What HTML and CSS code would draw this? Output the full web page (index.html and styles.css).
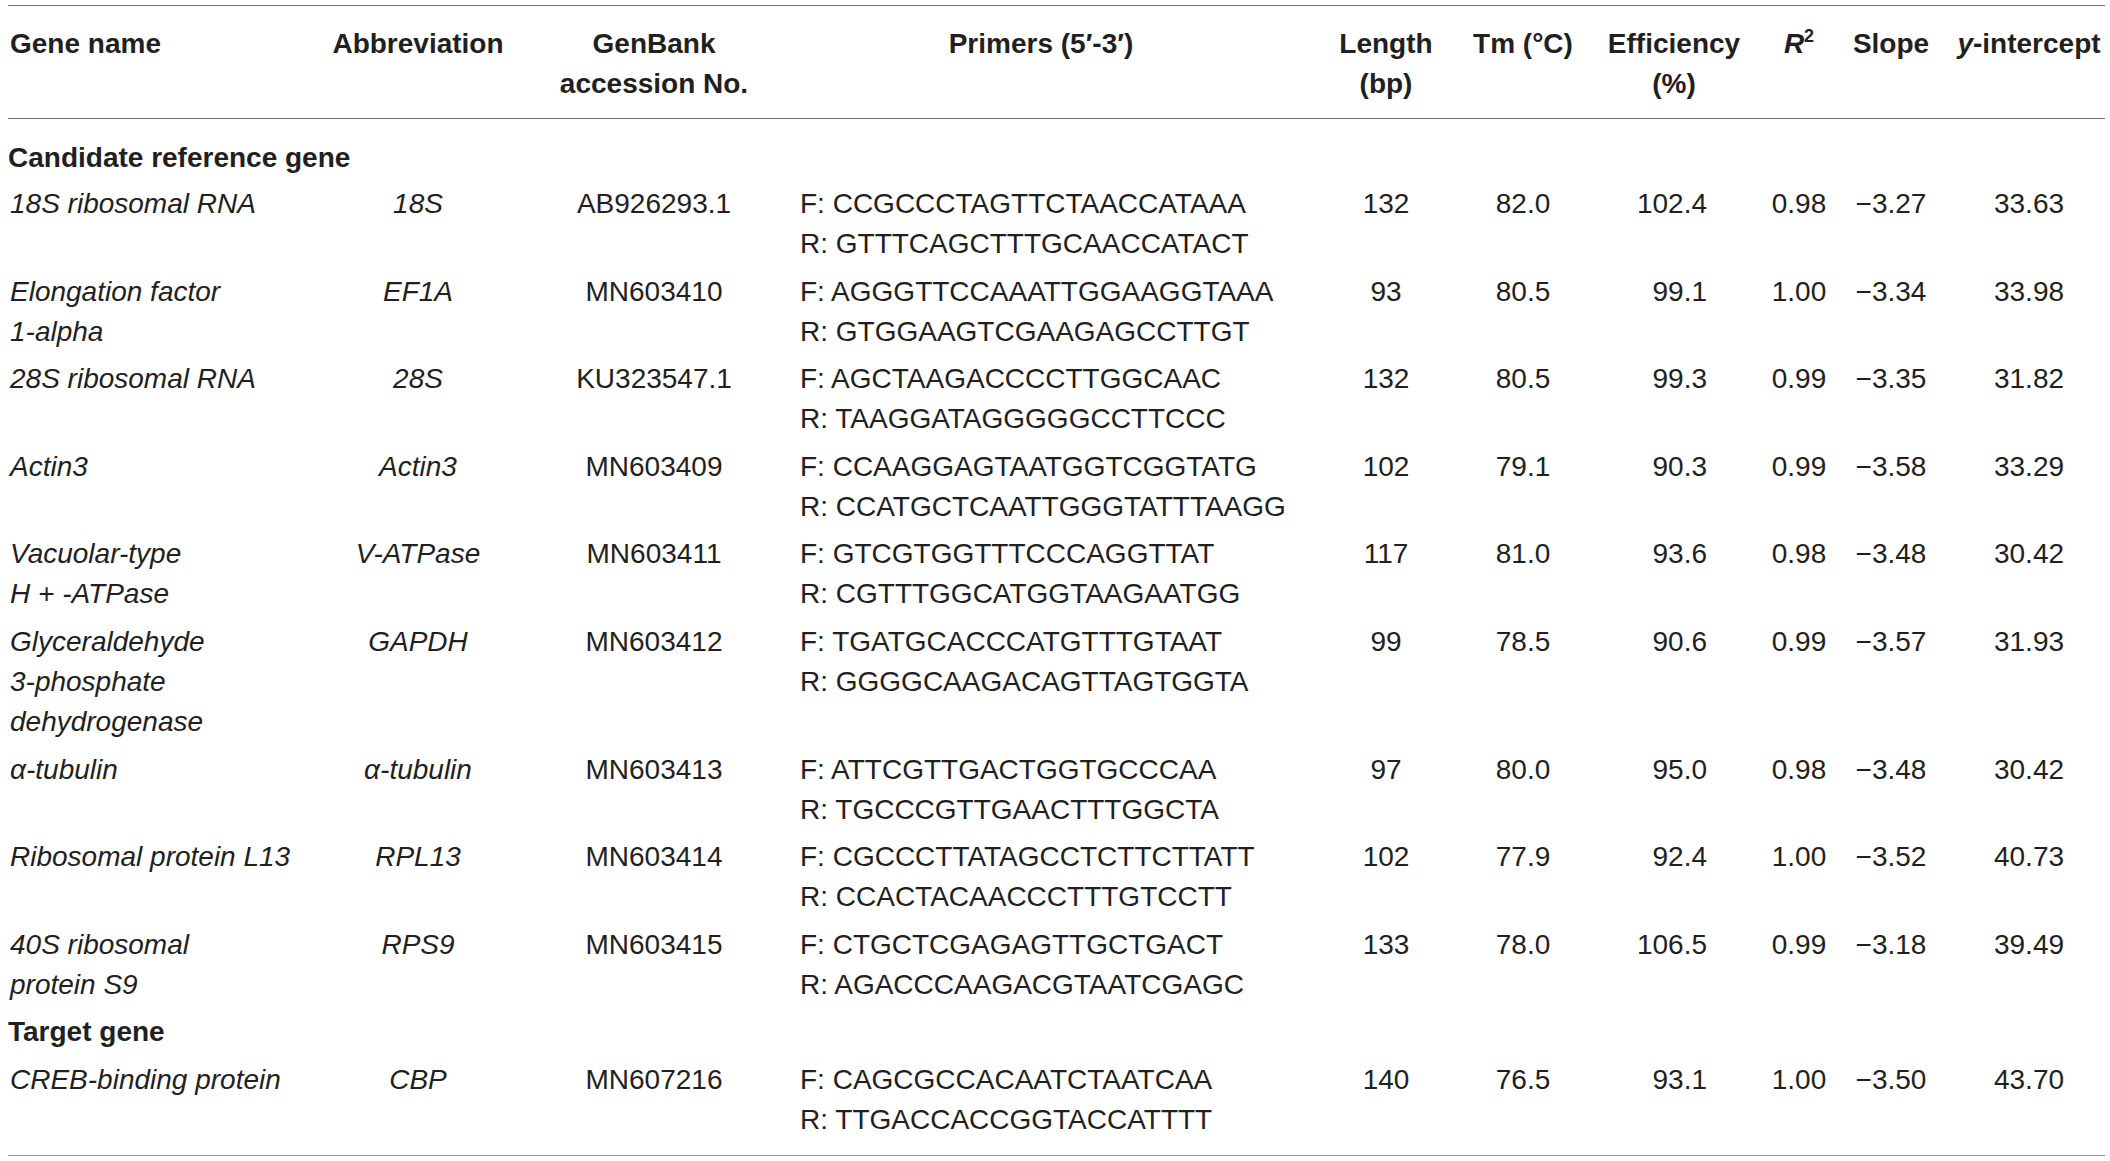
FILE: index.html
```html
<!DOCTYPE html>
<html lang="en">
<head>
<meta charset="utf-8">
<title>Candidate reference genes</title>
<link rel="stylesheet" href="styles.css">
</head>
<body>
<div class="wrap">
<table class="genes">
  <colgroup>
    <col class="w1"><col class="w2"><col class="w3"><col class="w4"><col class="w5">
    <col class="w6"><col class="w7"><col class="w8"><col class="w9"><col class="w10">
  </colgroup>
  <thead>
    <tr>
      <th class="left">Gene name</th>
      <th>Abbreviation</th>
      <th>GenBank<br>accession No.</th>
      <th>Primers (5′-3′)</th>
      <th>Length<br>(bp)</th>
      <th>Tm (°C)</th>
      <th>Efficiency<br>(%)</th>
      <th><i>R</i><sup>2</sup></th>
      <th>Slope</th>
      <th><i>y</i>-intercept</th>
    </tr>
  </thead>
  <tbody>
    <tr class="group first"><td colspan="10">Candidate reference gene</td></tr>
    <tr>
      <td class="name">18S ribosomal RNA</td><td class="abbr">18S</td><td class="acc">AB926293.1</td>
      <td class="primer">F: CCGCCCTAGTTCTAACCATAAA<br>R: GTTTCAGCTTTGCAACCATACT</td>
      <td class="num">132</td><td class="num">82.0</td><td class="eff">102.4</td><td class="num">0.98</td><td class="num">−3.27</td><td class="num">33.63</td>
    </tr>
    <tr>
      <td class="name">Elongation factor<br>1-alpha</td><td class="abbr">EF1A</td><td class="acc">MN603410</td>
      <td class="primer">F: AGGGTTCCAAATTGGAAGGTAAA<br>R: GTGGAAGTCGAAGAGCCTTGT</td>
      <td class="num">93</td><td class="num">80.5</td><td class="eff">99.1</td><td class="num">1.00</td><td class="num">−3.34</td><td class="num">33.98</td>
    </tr>
    <tr>
      <td class="name">28S ribosomal RNA</td><td class="abbr">28S</td><td class="acc">KU323547.1</td>
      <td class="primer">F: AGCTAAGACCCCTTGGCAAC<br>R: TAAGGATAGGGGGCCTTCCC</td>
      <td class="num">132</td><td class="num">80.5</td><td class="eff">99.3</td><td class="num">0.99</td><td class="num">−3.35</td><td class="num">31.82</td>
    </tr>
    <tr>
      <td class="name">Actin3</td><td class="abbr">Actin3</td><td class="acc">MN603409</td>
      <td class="primer">F: CCAAGGAGTAATGGTCGGTATG<br>R: CCATGCTCAATTGGGTATTTAAGG</td>
      <td class="num">102</td><td class="num">79.1</td><td class="eff">90.3</td><td class="num">0.99</td><td class="num">−3.58</td><td class="num">33.29</td>
    </tr>
    <tr>
      <td class="name">Vacuolar-type<br>H + -ATPase</td><td class="abbr">V-ATPase</td><td class="acc">MN603411</td>
      <td class="primer">F: GTCGTGGTTTCCCAGGTTAT<br>R: CGTTTGGCATGGTAAGAATGG</td>
      <td class="num">117</td><td class="num">81.0</td><td class="eff">93.6</td><td class="num">0.98</td><td class="num">−3.48</td><td class="num">30.42</td>
    </tr>
    <tr>
      <td class="name">Glyceraldehyde<br>3-phosphate<br>dehydrogenase</td><td class="abbr">GAPDH</td><td class="acc">MN603412</td>
      <td class="primer">F: TGATGCACCCATGTTTGTAAT<br>R: GGGGCAAGACAGTTAGTGGTA</td>
      <td class="num">99</td><td class="num">78.5</td><td class="eff">90.6</td><td class="num">0.99</td><td class="num">−3.57</td><td class="num">31.93</td>
    </tr>
    <tr>
      <td class="name">α-tubulin</td><td class="abbr">α-tubulin</td><td class="acc">MN603413</td>
      <td class="primer">F: ATTCGTTGACTGGTGCCCAA<br>R: TGCCCGTTGAACTTTGGCTA</td>
      <td class="num">97</td><td class="num">80.0</td><td class="eff">95.0</td><td class="num">0.98</td><td class="num">−3.48</td><td class="num">30.42</td>
    </tr>
    <tr>
      <td class="name">Ribosomal protein L13</td><td class="abbr">RPL13</td><td class="acc">MN603414</td>
      <td class="primer">F: CGCCCTTATAGCCTCTTCTTATT<br>R: CCACTACAACCCTTTGTCCTT</td>
      <td class="num">102</td><td class="num">77.9</td><td class="eff">92.4</td><td class="num">1.00</td><td class="num">−3.52</td><td class="num">40.73</td>
    </tr>
    <tr>
      <td class="name">40S ribosomal<br>protein S9</td><td class="abbr">RPS9</td><td class="acc">MN603415</td>
      <td class="primer">F: CTGCTCGAGAGTTGCTGACT<br>R: AGACCCAAGACGTAATCGAGC</td>
      <td class="num">133</td><td class="num">78.0</td><td class="eff">106.5</td><td class="num">0.99</td><td class="num">−3.18</td><td class="num">39.49</td>
    </tr>
    <tr class="group"><td colspan="10">Target gene</td></tr>
    <tr class="last">
      <td class="name">CREB-binding protein</td><td class="abbr">CBP</td><td class="acc">MN607216</td>
      <td class="primer">F: CAGCGCCACAATCTAATCAA<br>R: TTGACCACCGGTACCATTTT</td>
      <td class="num">140</td><td class="num">76.5</td><td class="eff">93.1</td><td class="num">1.00</td><td class="num">−3.50</td><td class="num">43.70</td>
    </tr>
  </tbody>
</table>
</div>
</body>
</html>
```

FILE: styles.css
```css
html, body {
  margin: 0;
  padding: 0;
  background: #ffffff;
}

.wrap {
  padding: 5px 0 0 8px;
}

.genes {
  border-collapse: collapse;
  table-layout: fixed;
  width: 2097px;
  font-family: "Liberation Sans", Arial, Helvetica, sans-serif;
  font-size: 28px;
  line-height: 40px;
  color: #231f20;
  border-top: 1px solid #747474;
  border-bottom: 1px solid #9a9a9a;
}

.w1 { width: 297px; }
.w2 { width: 226px; }
.w3 { width: 246px; }
.w4 { width: 528px; }
.w5 { width: 162px; }
.w6 { width: 112px; }
.w7 { width: 190px; }
.w8 { width: 60px; }
.w9 { width: 124px; }
.w10 { width: 152px; }

.genes th,
.genes td {
  padding: 0;
  vertical-align: top;
  white-space: nowrap;
  text-align: center;
}

.genes thead th {
  font-weight: bold;
  padding: 18px 0 14px;
  border-bottom: 1px solid #747474;
}

.genes thead th.left {
  text-align: left;
  padding-left: 2px;
}

.genes sup {
  font-size: 18px;
  line-height: 0;
  vertical-align: 11px;
}

.genes tbody td {
  padding-top: 4px;
  padding-bottom: 3.6px;
}

.genes tr.group td {
  font-weight: bold;
  text-align: left;
  padding-left: 0;
}

.genes tr.group.first td {
  padding-top: 19px;
  padding-bottom: 2px;
}

.genes tr.last td {
  padding-bottom: 15px;
}

.genes td.name {
  text-align: left;
  font-style: italic;
  padding-left: 2px;
}

.genes td.abbr {
  font-style: italic;
}

.genes td.primer {
  text-align: left;
  padding-left: 23px;
}

.genes td.eff {
  text-align: right;
  padding-right: 62px;
}
```
